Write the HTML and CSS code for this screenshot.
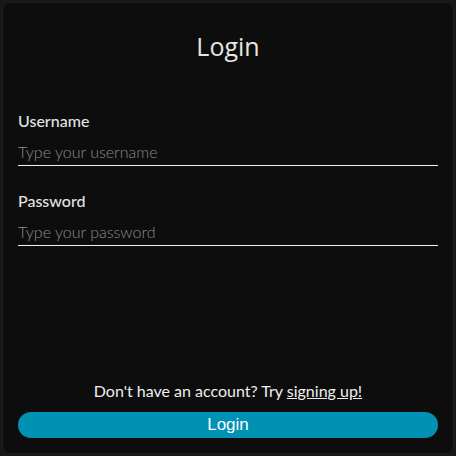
FILE: index.html
```html
<!DOCTYPE html>
<html lang="en">
<head>
<meta charset="utf-8">
<title>Login</title>
<link rel="stylesheet" href="styles.css">
</head>
<body>
<div class="card">
  <h1 class="title">Login</h1>
  <form class="form">
    <div class="field">
      <label class="label" for="username">Username</label>
      <input class="input" id="username" type="text" placeholder="Type your username">
    </div>
    <div class="field">
      <label class="label" for="password">Password</label>
      <input class="input" id="password" type="password" placeholder="Type your password">
    </div>
  </form>
  <div class="footer">
    <p class="signup">Don't have an account? Try <a class="link" href="#">signing up!</a></p>
    <button class="button" type="button">Login</button>
  </div>
</div>
</body>
</html>
```
FILE: styles.css
```css
* { box-sizing: border-box; }
html, body { height: 100%; }
body {
  margin: 0;
  padding: 2px;
  background: #181818;
  font-family: Lato, "Liberation Sans", sans-serif;
}
.card {
  height: 100%;
  display: flex;
  flex-direction: column;
  background: #0d0d0d;
  border: 1px solid #1f1f1f;
  border-radius: 8px;
  padding: 27px 15px 15px;
}
.title {
  margin: 0;
  font-family: "Open Sans", sans-serif;
  font-weight: 400;
  font-size: 25px;
  line-height: 32px;
  color: #e6e6e6;
  text-align: center;
}
.form {
  margin-top: 49px;
  display: flex;
  flex-direction: column;
  gap: 25px;
}
.field {
  display: flex;
  flex-direction: column;
}
.label {
  font-size: 16px;
  line-height: 19px;
  font-weight: 500;
  color: #e2e2e2;
  margin-bottom: 10px;
}
.input {
  height: 26px;
  padding: 0 0 2px 0;
  margin: 0;
  border: none;
  border-bottom: 1px solid #f2f2f2;
  background: transparent;
  font-family: Lato, sans-serif;
  font-size: 16px;
  font-weight: 300;
  color: #e2e2e2;
  outline: none;
}
.input::placeholder { color: #8c8c8c; }
.footer {
  margin-top: auto;
  display: flex;
  flex-direction: column;
  gap: 12px;
}
.signup {
  margin: 0;
  font-size: 16px;
  line-height: 19px;
  color: #f0f0f0;
  text-align: center;
}
.link { color: #f0f0f0; text-decoration: underline; }
.button {
  height: 26px;
  border: none;
  border-radius: 13px;
  background: #0091b5;
  color: #ffffff;
  font-family: "Liberation Sans", Arial, sans-serif;
  font-size: 17px;
  padding: 0;
}
```
